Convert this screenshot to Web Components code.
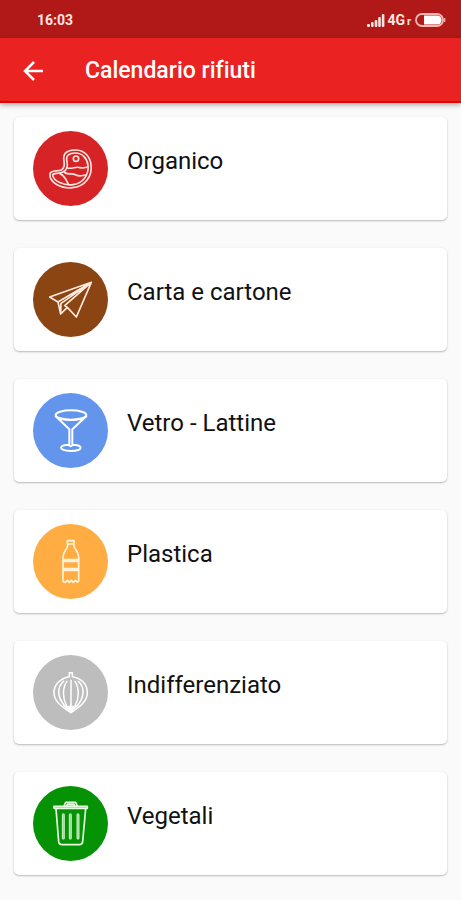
<!DOCTYPE html>
<html lang="it">
<head>
<meta charset="utf-8">
<meta name="viewport" content="width=device-width, initial-scale=1">
<title>Calendario rifiuti</title>
<style>
  body { margin: 0; background: #fafafa; font-family: Roboto, "Liberation Sans", sans-serif; font-variant-ligatures: none; }
</style>
</head>
<body>
<waste-app></waste-app>
<script>
const define = (name, html) => {
  const template = document.createElement('template');
  template.innerHTML = html;
  customElements.define(name, class extends HTMLElement {
    constructor() {
      super();
      this.attachShadow({ mode: 'open' }).append(template.content.cloneNode(true));
    }
  });
};

define('status-bar', `
  <style>
    :host { display: flex; align-items: center; justify-content: space-between; height: 38px;
      box-sizing: border-box; padding: 2px 15px 0 37px; background: #b01917; color: #ffe3e0; font-weight: 700; }
    time { font-size: 14px; line-height: 16px; }
    .right { display: flex; align-items: center; }
    .net { font-size: 14px; line-height: 16px; margin-left: 2px; }
    .roam { font-size: 11px; line-height: 12px; margin: 4px 4px 0 2px; }
    svg { display: block; }
  </style>
  <time>16:03</time>
  <div class="right">
    <svg width="18" height="13" viewBox="0 0 18 13" fill="#ffe3e0" aria-hidden="true">
      <rect x="0" y="10" width="3" height="3" rx="1"/><rect x="4" y="8" width="2.6" height="5" rx="1"/>
      <rect x="7.7" y="6" width="2.6" height="7" rx="1"/><rect x="11.2" y="3" width="2.6" height="10" rx="1"/>
      <rect x="14.8" y="0" width="2.6" height="13" rx="1"/>
    </svg>
    <span class="net">4G</span><span class="roam">r</span>
    <svg width="31" height="14" viewBox="0 0 31 14" aria-hidden="true">
      <rect x="1" y="1" width="27" height="12" rx="6" fill="none" stroke="#f5b5b0" stroke-width="1.8"/>
      <path d="M9 2.4h13a4.6 4.6 0 0 1 0 9.2H9z" fill="#fff"/>
      <path d="M29.6 5v4" stroke="#f5b5b0" stroke-width="1.4"/>
    </svg>
  </div>`);

define('app-bar', `
  <style>
    :host { display: flex; align-items: center; height: 65px; box-sizing: border-box; padding: 3px 21px 0;
      background: #eb2222; color: #fff; border-bottom: 2px solid #dd0808;
      box-shadow: 0 2px 5px rgba(0,0,0,.32); position: relative; }
    button { display: block; border: 0; padding: 0; background: none; color: inherit; cursor: pointer; }
    svg { display: block; }
    h1 { margin: 0 0 0 40px; font-size: 23px; line-height: 28px; font-weight: 500; }
  </style>
  <button type="button" aria-label="Indietro">
    <svg width="24" height="24" viewBox="0 0 24 24" fill="none" stroke="currentColor" stroke-width="2.5"><path d="M22 12H4M13 3l-9 9 9 9"/></svg>
  </button>
  <h1><slot></slot></h1>`);

define('waste-card', `
  <style>
    :host { display: flex; align-items: flex-start; height: 103px; box-sizing: border-box;
      padding: 14px 19px; background: #fff; border-radius: 5px;
      box-shadow: 0 1px 2px rgba(0,0,0,.26), 0 0 2px rgba(0,0,0,.04); }
    .disc { flex: none; width: 75px; height: 75px; border-radius: 50%; background: var(--disc); }
    h2 { margin: 16px 0 0 19px; font-size: 24px; line-height: 28px; font-weight: 400; color: #111; }
  </style>
  <div class="disc"><slot name="icon"></slot></div>
  <h2><slot></slot></h2>`);

/* Each glyph is drawn on a 225-unit disc, three units to the pixel. */
const icons = {
  steak: ['25 19 225 225', `<g stroke="#ffe4df" stroke-width="5">
    <path d="M118 110C112 82 133 75 155 76C179 77 197 96 199 121C204 155 180 187 143 189C113 194 73 174 76 148C77 135 99 141 110 136C119 131 120 121 118 110Z"/>
    <path d="M127 111C122 91 135 85 152 85C173 85 188 101 190 123C193 150 174 177 145 180C118 184 86 169 84 151C84 144 103 148 115 142C127 136 130 125 127 111Z"/>
    <circle cx="154" cy="102" r="8"/><path d="M128 130C143 134 153 124 167 129C178 132 181 128 189 127M119 142C126 153 142 143 154 151C166 158 174 151 184 151M106 147C119 151 124 165 132 180"/>
    </g>`],
  plane: ['25 22 225 225', `<g stroke="#ffe9df" stroke-width="5">
    <path d="M200 83L75 127L100 142L108 178L128 158L155 187ZM200 83L100 142M200 83L109 146L108 178M200 83L120 153L128 158"/>
    </g>`],
  glass: ['25 25 225 225', `<g stroke="#fff" stroke-width="6">
    <ellipse cx="139" cy="91" rx="46" ry="14"/><path d="M93 95L134 134V178M185 95L143 134V178M109 103Q139 109 168 103M134 180C101 180 100 198 138 199C177 198 177 181 143 180M134 182Q138 187 143 182"/></g>`],
  bottle: ['25 22 225 225', `<g stroke="#fff3dd" stroke-width="5">
    <path d="M128 72H148V82H128ZM130 82C130 99 115 102 115 120V190Q115 197 122 197L128 191L134 197L140 191L146 197L152 191C160 200 162 194 162 190V120C162 102 147 99 147 82M115 129H162M115 134H162M115 156H162M115 161H162"/></g>`],
  onion: ['25 22 225 225', `<g stroke="#fff" stroke-width="4.5">
    <path d="M134 87V75H143V87C170 91 188 110 188 135C188 159 169 175 139 195C108 175 88 159 88 135C88 110 107 92 134 87Z"/>
    <path d="M117 101C96 118 98 149 118 171M127 101C112 122 114 153 126 175M139 98V179M151 101C165 122 163 153 151 175M161 101C181 118 179 149 160 171"/>
    <path d="M116 172L130 177L139 174L148 177L162 172L139 194Z" fill="#fff" stroke-width="3"/></g>`],
  bin: ['25 25 225 225', `<g stroke="#e5ffe0" stroke-width="5">
    <path d="M88 86H188V92H88ZM118 85L123 74H153L158 85M126 84L128 80H148L150 84M94 93L102 192Q103 201 112 201H164Q173 201 174 192L183 93"/>
    <path d="M116 111V181M137 111V181M160 111V181" stroke="#c9efc5" stroke-width="9"/><path d="M116 110V182M137 110V182M160 110V182" stroke="#7fcb7c" stroke-width="2"/></g>`]
};

customElements.define('waste-icon', class extends HTMLElement {
  constructor() { super(); this.attachShadow({ mode: 'open' }); }
  connectedCallback() {
    const [box, art] = icons[this.getAttribute('name')];
    this.shadowRoot.innerHTML = `<style>:host { display: block; } svg { display: block; width: 100%; height: 100%; }</style>
      <svg viewBox="${box}" fill="none" stroke-linecap="round" stroke-linejoin="round" aria-hidden="true">${art}</svg>`;
  }
});

define('waste-app', `
  <style>
    :host { display: block; }
    ul { display: grid; gap: 28px; margin: 0; padding: 14px 14px 24px; list-style: none; }
  </style>
  <header><status-bar></status-bar><app-bar>Calendario rifiuti</app-bar></header>
  <main><ul>
    <li><waste-card style="--disc:#d62426"><waste-icon slot="icon" name="steak"></waste-icon>Organico</waste-card></li>
    <li><waste-card style="--disc:#8b4513"><waste-icon slot="icon" name="plane"></waste-icon>Carta e cartone</waste-card></li>
    <li><waste-card style="--disc:#6495ed"><waste-icon slot="icon" name="glass"></waste-icon>Vetro - Lattine</waste-card></li>
    <li><waste-card style="--disc:#ffad42"><waste-icon slot="icon" name="bottle"></waste-icon>Plastica</waste-card></li>
    <li><waste-card style="--disc:#bdbdbd"><waste-icon slot="icon" name="onion"></waste-icon>Indifferenziato</waste-card></li>
    <li><waste-card style="--disc:#059205"><waste-icon slot="icon" name="bin"></waste-icon>Vegetali</waste-card></li>
  </ul></main>`);
</script>
</body>
</html>
